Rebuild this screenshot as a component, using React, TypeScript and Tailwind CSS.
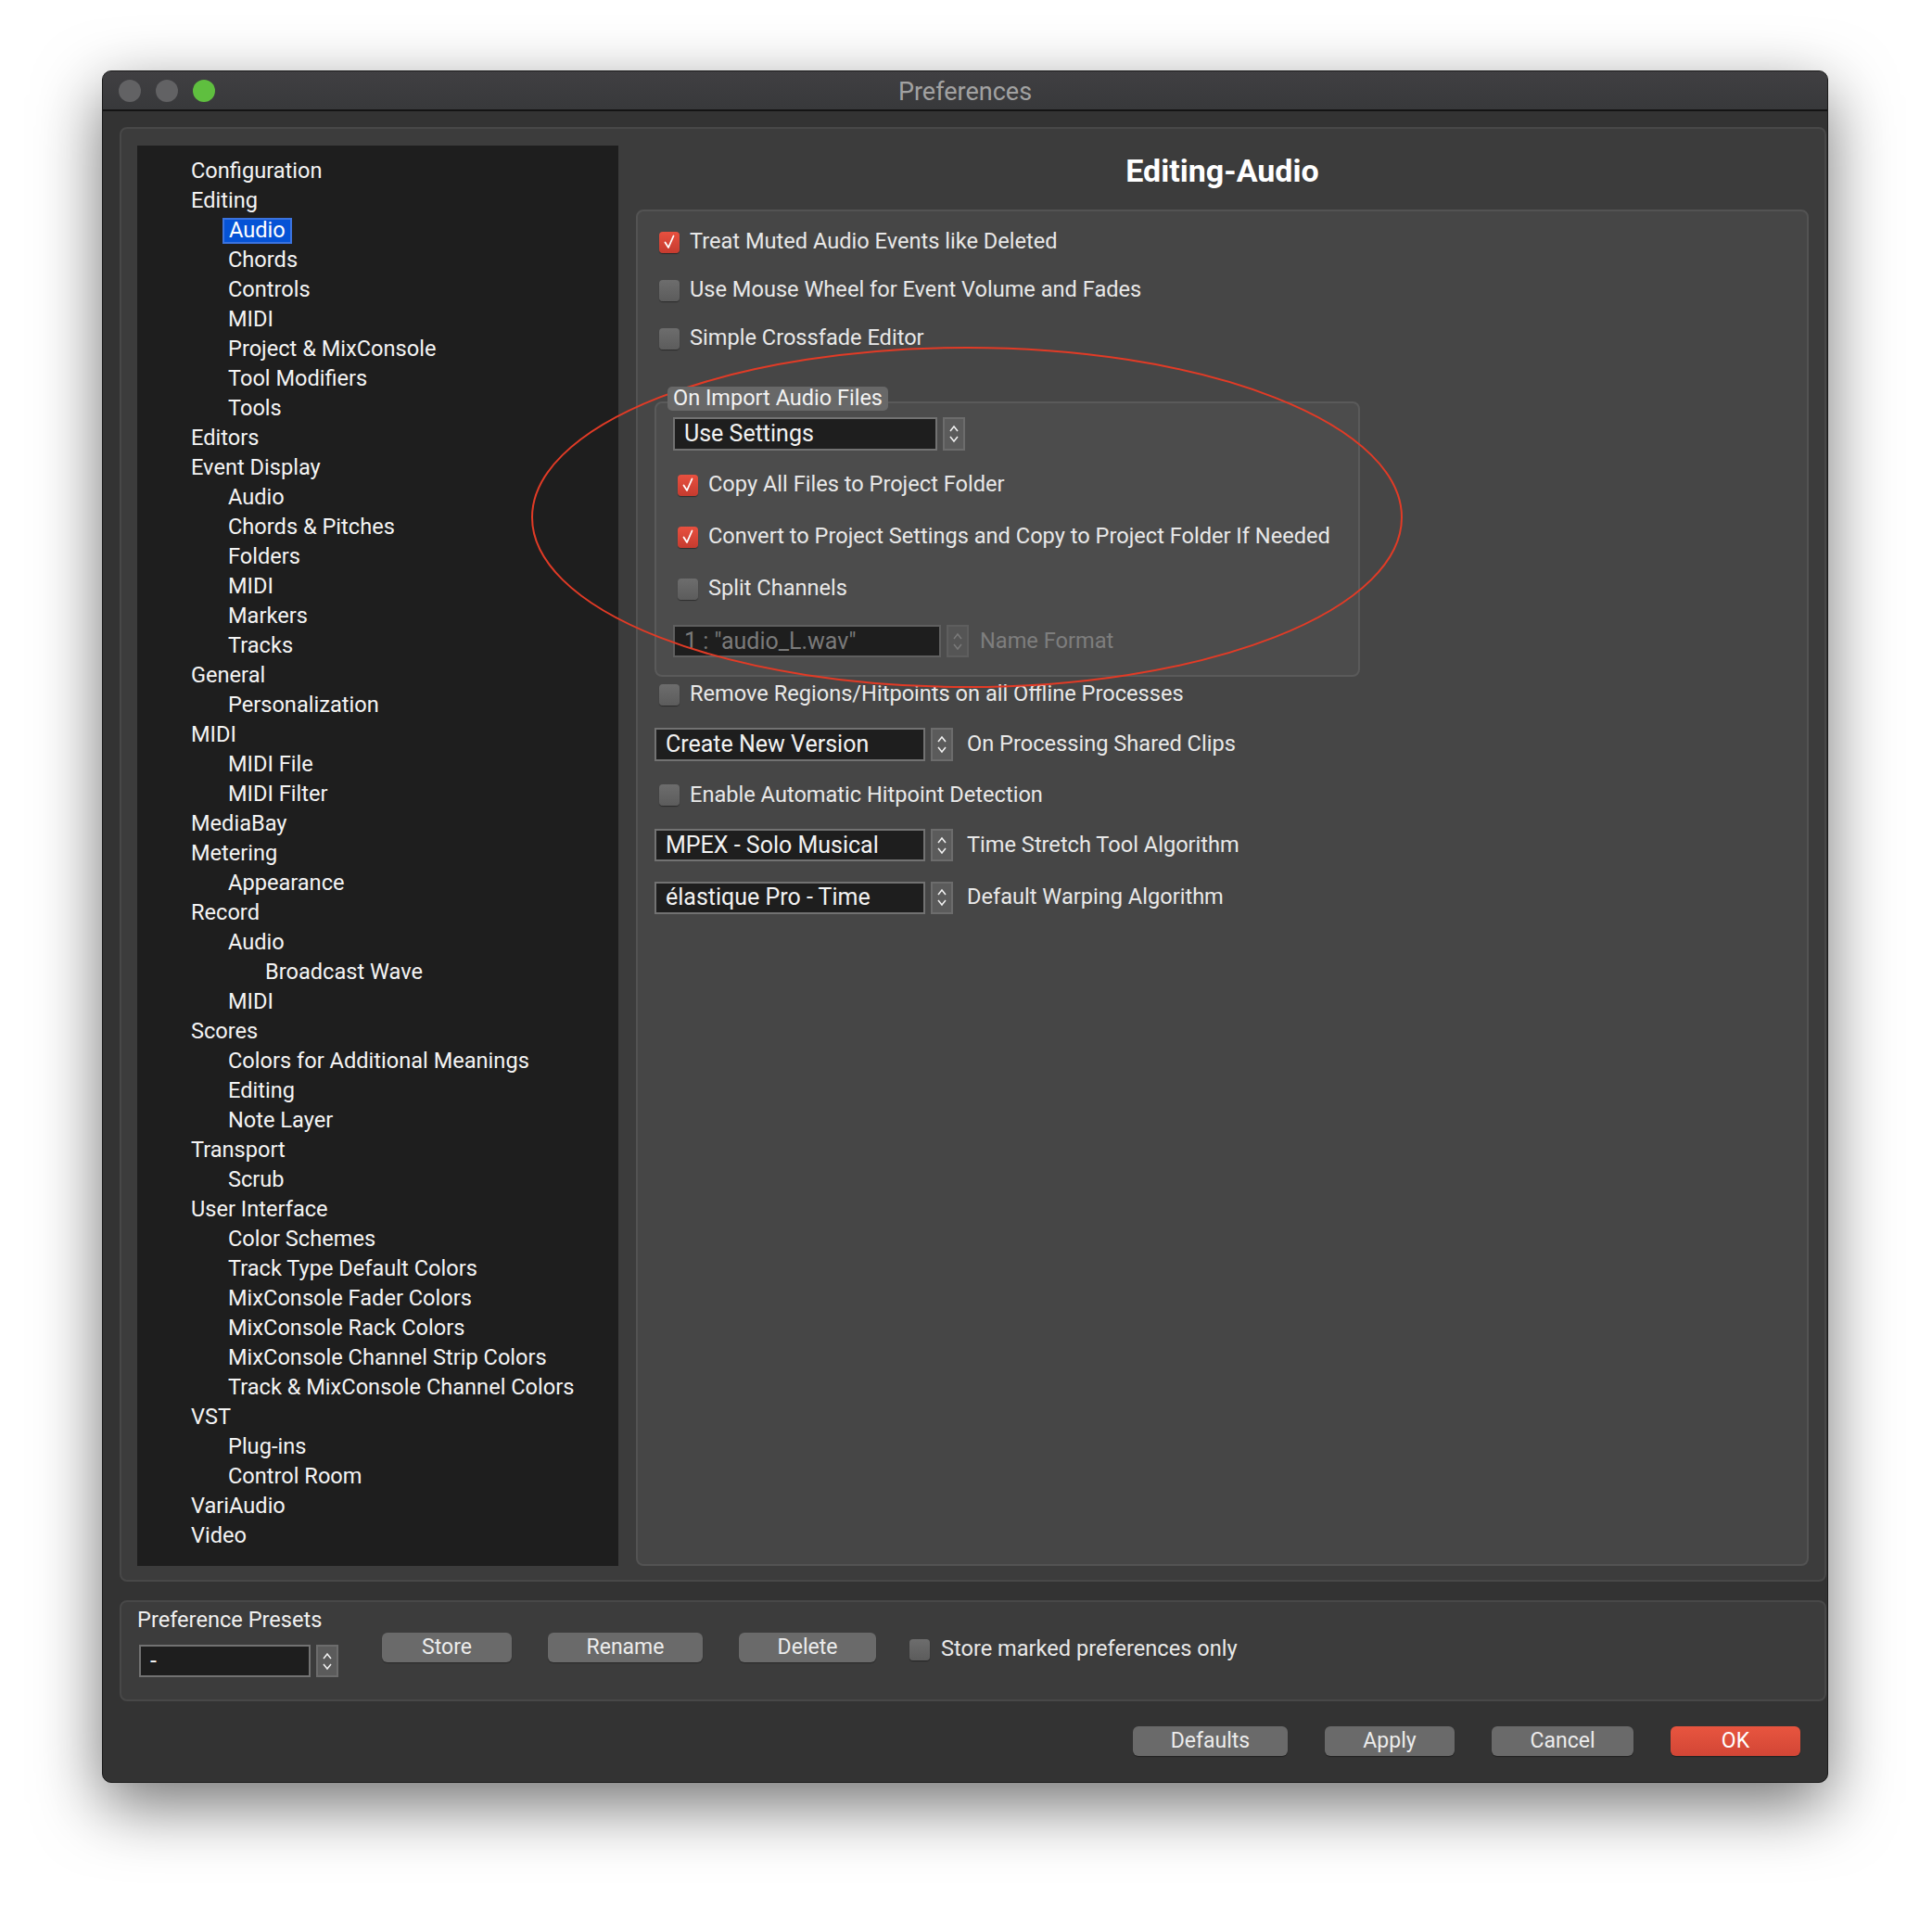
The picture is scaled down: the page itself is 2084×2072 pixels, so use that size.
import React from 'react';

type TreeItem = { label: string; level: number; selected?: boolean };

const tree: TreeItem[] = [
    { label: 'Configuration', level: 0 },
    { label: 'Editing', level: 0 },
    { label: 'Audio', level: 1, selected: true },
    { label: 'Chords', level: 1 },
    { label: 'Controls', level: 1 },
    { label: 'MIDI', level: 1 },
    { label: 'Project & MixConsole', level: 1 },
    { label: 'Tool Modifiers', level: 1 },
    { label: 'Tools', level: 1 },
    { label: 'Editors', level: 0 },
    { label: 'Event Display', level: 0 },
    { label: 'Audio', level: 1 },
    { label: 'Chords & Pitches', level: 1 },
    { label: 'Folders', level: 1 },
    { label: 'MIDI', level: 1 },
    { label: 'Markers', level: 1 },
    { label: 'Tracks', level: 1 },
    { label: 'General', level: 0 },
    { label: 'Personalization', level: 1 },
    { label: 'MIDI', level: 0 },
    { label: 'MIDI File', level: 1 },
    { label: 'MIDI Filter', level: 1 },
    { label: 'MediaBay', level: 0 },
    { label: 'Metering', level: 0 },
    { label: 'Appearance', level: 1 },
    { label: 'Record', level: 0 },
    { label: 'Audio', level: 1 },
    { label: 'Broadcast Wave', level: 2 },
    { label: 'MIDI', level: 1 },
    { label: 'Scores', level: 0 },
    { label: 'Colors for Additional Meanings', level: 1 },
    { label: 'Editing', level: 1 },
    { label: 'Note Layer', level: 1 },
    { label: 'Transport', level: 0 },
    { label: 'Scrub', level: 1 },
    { label: 'User Interface', level: 0 },
    { label: 'Color Schemes', level: 1 },
    { label: 'Track Type Default Colors', level: 1 },
    { label: 'MixConsole Fader Colors', level: 1 },
    { label: 'MixConsole Rack Colors', level: 1 },
    { label: 'MixConsole Channel Strip Colors', level: 1 },
    { label: 'Track & MixConsole Channel Colors', level: 1 },
    { label: 'VST', level: 0 },
    { label: 'Plug-ins', level: 1 },
    { label: 'Control Room', level: 1 },
    { label: 'VariAudio', level: 0 },
    { label: 'Video', level: 0 },
];

const indent = ['pl-[58px]', 'pl-[98px]', 'pl-[138px]'];

function Checkbox({ checked }: { checked?: boolean }) {
    if (checked) {
        return (
            <div className="w-[22px] h-[23px] rounded-[4px] bg-gradient-to-b from-[#e8503f] to-[#c63b2f] shadow-[0_1px_1px_rgba(0,0,0,0.4)] flex items-center justify-center shrink-0">
                <svg width="14" height="16" viewBox="0 0 14 16">
                    <path d="M2.5 8.5 L6 14 L11.5 1.5" fill="none" stroke="#fff" strokeWidth="1.8" strokeLinecap="round" strokeLinejoin="round" />
                </svg>
            </div>
        );
    }
    return <div className="w-[22px] h-[23px] rounded-[4px] bg-gradient-to-b from-[#6d6d6d] to-[#5c5c5c] shadow-[0_1px_1px_rgba(0,0,0,0.4)] shrink-0" />;
}

function Stepper({ disabled }: { disabled?: boolean }) {
    const c = disabled ? '#7a7a7a' : '#f2f2f2';
    return (
        <div className={`w-[24px] self-stretch border-2 flex items-center justify-center ${disabled ? 'bg-[#555555] border-[#5e5e5e]' : 'bg-[#5b5b5b] border-[#6c6c6c]'}`}>
            <svg width="12" height="26" viewBox="0 0 12 26">
                <path d="M2 10 L6 5 L10 10" fill="none" stroke={c} strokeWidth="1.5" />
                <path d="M2 16 L6 21 L10 16" fill="none" stroke={c} strokeWidth="1.5" />
            </svg>
        </div>
    );
}

function Select({ value, width, disabled, height = 'h-[36px]' }: { value: string; width: string; disabled?: boolean; height?: string }) {
    return (
        <div className={`flex ${height} gap-[6px] shrink-0`}>
            <div className={`${width} h-full bg-[#1e1e1e] border-2 flex items-center pl-[10px] text-[25px] ${disabled ? 'border-[#5f5f5f] text-[#7a7a7a]' : 'border-[#727272] text-[#f2f2f2]'}`}>
                {value}
            </div>
            <Stepper disabled={disabled} />
        </div>
    );
}

function CheckRow({ label, checked, h }: { label: string; checked?: boolean; h: string }) {
    return (
        <div className={`flex items-center ${h} gap-[11px]`}>
            <Checkbox checked={checked} />
            <span className="text-[23.6px] text-[#e8e8e8]">{label}</span>
        </div>
    );
}

function Button({ label, width, primary }: { label: string; width: string; primary?: boolean }) {
    return (
        <div className={`${width} h-[32px] rounded-[6px] flex items-center justify-center text-[23px] shadow-[0_1px_1px_rgba(0,0,0,0.35)] ${primary ? 'bg-gradient-to-b from-[#e8553f] to-[#d24636] text-white' : 'bg-[#6a6a6a] text-[#ececec]'}`}>
            {label}
        </div>
    );
}

export default function App() {
    return (
        <div className="relative w-[2084px] h-[2072px] bg-white pt-[76px] pl-[110px] font-[family-name:Roboto,sans-serif] text-[#f0f0f0]">
            <div className="w-[1862px] h-[1847px] rounded-[10px] bg-[#333333] border border-[#1a1a1a] shadow-[0_24px_70px_rgba(0,0,0,0.55)] flex flex-col overflow-hidden">
                {/* title bar */}
                <div className="h-[43px] shrink-0 bg-gradient-to-b from-[#403f42] to-[#38393b] border-b-2 border-[#141414] relative flex items-center">
                    <div className="flex gap-[16px] pl-[17px]">
                        <div className="w-[24px] h-[24px] rounded-full bg-[#626264]" />
                        <div className="w-[24px] h-[24px] rounded-full bg-[#626264]" />
                        <div className="w-[24px] h-[24px] rounded-full bg-[#5fbf3f]" />
                    </div>
                    <div className="absolute inset-0 flex items-center justify-center pt-[3px] text-[27px] text-[#a2a2a2]">Preferences</div>
                </div>

                <div className="flex-1 flex flex-col pt-[17px] pl-[18px] pr-[1px]">
                    {/* main panel */}
                    <div className="h-[1569px] rounded-[8px] bg-[#3c3c3c] border-2 border-[#484848] flex pl-[17px] pr-[17px] pt-[18px] pb-[15px] gap-[19px]">
                        <div className="w-[519px] bg-[#1e1e1e] pt-[12px] flex flex-col">
                            {tree.map((t, i) => (
                                <div key={i} className={`h-[32px] flex items-center text-[23.6px] text-[#f4f4f4] ${indent[t.level]}`}>
                                    {t.selected ? (
                                        <span className="-ml-[6px] px-[5px] h-[28px] flex items-center bg-[#0553d6] border-2 border-[#3b73df] text-white">{t.label}</span>
                                    ) : (
                                        t.label
                                    )}
                                </div>
                            ))}
                        </div>

                        <div className="flex-1 flex flex-col">
                            <div className="h-[69px] flex items-center justify-center pb-[14px] text-[34px] font-bold text-white">Editing-Audio</div>
                            <div className="flex-1 rounded-[8px] bg-[#464646] border-2 border-[#535353] pt-[7px] pl-[23px]">
                                <CheckRow h="h-[52px]" checked label="Treat Muted Audio Events like Deleted" />
                                <CheckRow h="h-[52px]" label="Use Mouse Wheel for Event Volume and Fades" />
                                <CheckRow h="h-[52px]" label="Simple Crossfade Editor" />

                                <div className="mt-[26px] -ml-[5px] w-[761px] flex flex-col">
                                    <div className="relative z-10 self-start ml-[14px] h-[26px] px-[6px] rounded-[5px] bg-[#686868] flex items-center text-[23.5px] text-[#f2f2f2]">On Import Audio Files</div>
                                    <div className="-mt-[10px] h-[297px] rounded-[8px] bg-[#4c4c4c] border-2 border-[#5a5a5a] pt-[15px] pl-[18px] pb-[19px] flex flex-col">
                                        <Select value="Use Settings" width="w-[285px]" />
                                        <div className="pl-[5px] mt-[9px]">
                                            <CheckRow h="h-[56px]" checked label="Copy All Files to Project Folder" />
                                            <CheckRow h="h-[56px]" checked label="Convert to Project Settings and Copy to Project Folder If Needed" />
                                            <CheckRow h="h-[56px]" label="Split Channels" />
                                        </div>
                                        <div className="mt-[11px] flex items-center gap-[12px]">
                                            <Select value={'1 : "audio_L.wav"'} width="w-[289px]" height="h-[35px]" disabled />
                                            <span className="text-[23.6px] text-[#7e7e7e]">Name Format</span>
                                        </div>
                                    </div>
                                </div>

                                <CheckRow h="h-[38px]" label="Remove Regions/Hitpoints on all Offline Processes" />
                                <div className="mt-[17px] -ml-[5px] flex items-center gap-[15px]">
                                    <Select value="Create New Version" width="w-[292px]" />
                                    <span className="text-[23.6px] text-[#e8e8e8]">On Processing Shared Clips</span>
                                </div>
                                <CheckRow h="h-[73px]" label="Enable Automatic Hitpoint Detection" />
                                <div className="-ml-[5px] flex items-center gap-[15px]">
                                    <Select value="MPEX - Solo Musical" width="w-[292px]" height="h-[35px]" />
                                    <span className="text-[23.6px] text-[#e8e8e8]">Time Stretch Tool Algorithm</span>
                                </div>
                                <div className="mt-[21px] -ml-[5px] flex items-center gap-[15px]">
                                    <Select value="élastique Pro - Time" width="w-[292px]" height="h-[35px]" />
                                    <span className="text-[23.6px] text-[#e8e8e8]">Default Warping Algorithm</span>
                                </div>
                            </div>
                        </div>
                    </div>

                    {/* presets panel */}
                    <div className="mt-[20px] h-[109px] rounded-[8px] bg-[#3c3c3c] border-2 border-[#484848] pl-[17px] pt-[6px]">
                        <div className="text-[23.6px] text-[#f0f0f0] h-[28px] flex items-center">Preference Presets</div>
                        <div className="flex items-start">
                            <div className="mt-[12px] ml-[2px]">
                                <Select value="-" width="w-[185px]" height="h-[35px]" />
                            </div>
                            <div className="flex gap-[39px] ml-[47px] mt-[-1px]">
                                <Button label="Store" width="w-[140px]" />
                                <Button label="Rename" width="w-[167px]" />
                                <Button label="Delete" width="w-[148px]" />
                            </div>
                            <div className="ml-[36px] flex items-center gap-[12px] h-[40px] -mt-[3px]">
                                <Checkbox />
                                <span className="text-[23.6px] text-[#e8e8e8]">Store marked preferences only</span>
                            </div>
                        </div>
                    </div>

                    {/* footer */}
                    <div className="flex justify-end gap-[40px] pr-[28px] mt-[27px]">
                        <Button label="Defaults" width="w-[167px]" />
                        <Button label="Apply" width="w-[140px]" />
                        <Button label="Cancel" width="w-[153px]" />
                        <Button label="OK" width="w-[140px]" primary />
                    </div>
                </div>
            </div>

            {/* annotation */}
            <svg className="absolute inset-0 pointer-events-none" width="2084" height="2072" viewBox="0 0 2084 2072">
                <ellipse cx="1043" cy="558" rx="469" ry="183" fill="none" stroke="#e23b26" strokeWidth="2" />
            </svg>
        </div>
    );
}
